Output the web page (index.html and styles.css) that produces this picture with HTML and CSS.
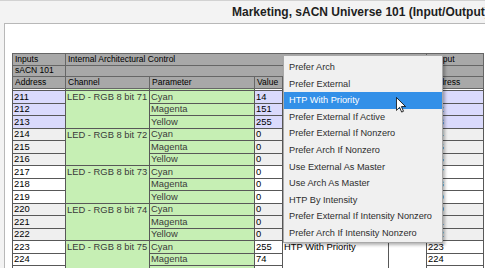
FILE: index.html
```html
<!DOCTYPE html>
<html lang="en">
<head>
    <meta charset="UTF-8">
    <meta name="viewport" content="width=device-width, initial-scale=1.0">
    <title>Marketing, sACN Universe 101</title>
    <link rel="stylesheet" href="styles.css">
</head>
<body>
    <div class="title">Marketing, sACN Universe 101 (Input/Output)</div>

    <div class="panel">
        <table class="grid head">
            <colgroup>
                <col class="c-addr"><col class="c-chan"><col class="c-param"><col class="c-val">
                <col class="c-mode"><col class="c-blank"><col class="c-out">
            </colgroup>
            <tr><td>Inputs</td><td colspan="5">Internal Architectural Control</td><td>Output</td></tr>
            <tr><td>sACN 101</td><td colspan="5"></td><td></td></tr>
            <tr><td>Address</td><td>Channel</td><td>Parameter</td><td>Value</td><td>Mode</td><td></td><td>Address</td></tr>
        </table>

        <div class="scroll">
            <table class="grid rows">
                <colgroup>
                    <col class="c-addr"><col class="c-chan"><col class="c-param"><col class="c-val">
                    <col class="c-mode"><col class="c-blank"><col class="c-out">
                </colgroup>
                <!-- bottom of fixture 70, scrolled under the header -->
                <tr><td>210</td><td class="fix"></td><td class="fix">Yellow</td><td>0</td><td></td><td></td><td>210</td></tr>

                <tr class="sel"><td>211</td><td class="fix" rowspan="3">LED - RGB 8 bit 71</td><td class="fix">Cyan</td><td>14</td><td rowspan="3">HTP With Priority</td><td rowspan="3"></td><td>211</td></tr>
                <tr class="sel"><td>212</td><td class="fix">Magenta</td><td>151</td><td>212</td></tr>
                <tr class="sel"><td>213</td><td class="fix">Yellow</td><td>255</td><td>213</td></tr>

                <tr class="alt"><td>214</td><td class="fix" rowspan="3">LED - RGB 8 bit 72</td><td class="fix">Cyan</td><td>0</td><td rowspan="3">HTP With Priority</td><td rowspan="3"></td><td>214</td></tr>
                <tr class="alt"><td>215</td><td class="fix">Magenta</td><td>0</td><td>215</td></tr>
                <tr class="alt"><td>216</td><td class="fix">Yellow</td><td>0</td><td>216</td></tr>

                <tr><td>217</td><td class="fix" rowspan="3">LED - RGB 8 bit 73</td><td class="fix">Cyan</td><td>0</td><td rowspan="3">HTP With Priority</td><td rowspan="3"></td><td>217</td></tr>
                <tr><td>218</td><td class="fix">Magenta</td><td>0</td><td>218</td></tr>
                <tr><td>219</td><td class="fix">Yellow</td><td>0</td><td>219</td></tr>

                <tr class="alt"><td>220</td><td class="fix" rowspan="3">LED - RGB 8 bit 74</td><td class="fix">Cyan</td><td>0</td><td rowspan="3">HTP With Priority</td><td rowspan="3"></td><td>220</td></tr>
                <tr class="alt"><td>221</td><td class="fix">Magenta</td><td>0</td><td>221</td></tr>
                <tr class="alt"><td>222</td><td class="fix">Yellow</td><td>0</td><td>222</td></tr>

                <tr><td>223</td><td class="fix" rowspan="3">LED - RGB 8 bit 75</td><td class="fix">Cyan</td><td>255</td><td rowspan="3">HTP With Priority</td><td rowspan="3"></td><td>223</td></tr>
                <tr><td>224</td><td class="fix">Magenta</td><td>74</td><td>224</td></tr>
                <tr><td>225</td><td class="fix">Yellow</td><td>0</td><td>225</td></tr>
            </table>
        </div>
    </div>

    <ul class="menu">
        <li>Prefer Arch</li>
        <li>Prefer External</li>
        <li class="hover">HTP With Priority</li>
        <li>Prefer External If Active</li>
        <li>Prefer External If Nonzero</li>
        <li>Prefer Arch If Nonzero</li>
        <li>Use External As Master</li>
        <li>Use Arch As Master</li>
        <li>HTP By Intensity</li>
        <li>Prefer External If Intensity Nonzero</li>
        <li>Prefer Arch If Intensity Nonzero</li>
    </ul>

    <svg class="cursor" viewBox="0 0 12 19" width="10" height="16">
        <path d="M0.5 0.5 V16 L4.3 12.3 L6.8 18 L9 17 L6.5 11.4 H11.5 Z" fill="#fff" stroke="#000" stroke-width="1" stroke-linejoin="round"/>
    </svg>
</body>
</html>
```

FILE: styles.css
```css
html, body {
    margin: 0;
    width: 485px;
    height: 268px;
    overflow: hidden;
}
body {
    background: #f3f3f3;
    font-family: "Liberation Sans", Arial, sans-serif;
    color: #000;
}
.title {
    border-top: 1px solid #d2d2d2;
    padding: 1px 0 0 232px;
    height: 21px;
    line-height: 21px;
    font-size: 12px;
    font-weight: bold;
    color: #1e1e1e;
    white-space: nowrap;
}
.panel {
    margin-left: 4px;
    height: 300px;
    border-top: 1px solid #b8b8b8;
    border-left: 1px solid #b8b8b8;
    background: #fff;
    padding: 29px 0 0 7px;
}
.grid {
    width: 471px;
    table-layout: fixed;
    border-collapse: collapse;
}
.grid td {
    padding: 0 1px;
    border: 1px solid #585858;
    white-space: nowrap;
    overflow: hidden;
    vertical-align: middle;
}
.c-addr { width: 53px; }
.c-chan { width: 84px; }
.c-param { width: 105px; }
.c-val { width: 28px; }
.c-mode { width: 106px; }
.c-blank { width: 38px; }
.c-out { width: 57px; }

.head tr {
    height: 11.5px;
}
.head td {
    background: #a8a8a8;
    border-color: #666;
    font-size: 8.5px;
    line-height: 9px;
    padding-left: 2px;
}

.scroll {
    overflow: hidden;
    height: 200px;
}
.rows {
    margin-top: -11px;
}
.rows tr {
    height: 12.5px;
}
.rows td {
    font-size: 9.4px;
    line-height: 10px;
    background: #fff;
}
.rows td[rowspan] {
    vertical-align: top;
    padding-top: 1px;
}
.rows tr.sel td {
    background: #dadafc;
}
.rows tr.alt td {
    background: #efefef;
}
.rows td.fix,
.rows tr.sel td.fix,
.rows tr.alt td.fix {
    background: #c6efb4;
    color: #3a3a3a;
}

.menu {
    position: absolute;
    left: 283px;
    top: 55px;
    width: 158px;
    margin: 0;
    padding: 3px 0 0;
    list-style: none;
    background: #f0f0f0;
    border: 1px solid #a9a9a9;
    box-shadow: 2px 2px 3px rgba(0, 0, 0, 0.3);
}
.menu li {
    height: 16.6px;
    line-height: 16.6px;
    padding-left: 5px;
    font-size: 9.2px;
    color: #2e2e2e;
    white-space: nowrap;
}
.menu li.hover {
    background: #3390e8;
    color: #fff;
}
.cursor {
    position: absolute;
    left: 396px;
    top: 97px;
}
```
